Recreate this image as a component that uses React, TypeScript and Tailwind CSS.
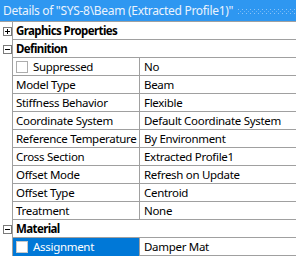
import React from "react";

type Row =
  | { kind: "section"; label: string; sign: "+" | "-" }
  | { kind: "prop"; label: string; value: string; check?: boolean; selected?: boolean };

const rows: Row[] = [
  { kind: "section", label: "Graphics Properties", sign: "+" },
  { kind: "section", label: "Definition", sign: "-" },
  { kind: "prop", label: "Suppressed", value: "No", check: true },
  { kind: "prop", label: "Model Type", value: "Beam" },
  { kind: "prop", label: "Stiffness Behavior", value: "Flexible" },
  { kind: "prop", label: "Coordinate System", value: "Default Coordinate System" },
  { kind: "prop", label: "Reference Temperature", value: "By Environment" },
  { kind: "prop", label: "Cross Section", value: "Extracted Profile1" },
  { kind: "prop", label: "Offset Mode", value: "Refresh on Update" },
  { kind: "prop", label: "Offset Type", value: "Centroid" },
  { kind: "prop", label: "Treatment", value: "None" },
  { kind: "section", label: "Material", sign: "-" },
  { kind: "prop", label: "Assignment", value: "Damper Mat", check: true, selected: true },
];

function SignBox({ sign }: { sign: "+" | "-" }) {
  return (
    <svg width="9" height="9" viewBox="0 0 9 9" className="block">
      <rect x="0.5" y="0.5" width="8" height="8" fill="white" stroke="#7a7a7a" />
      <line x1="2" y1="4.5" x2="7" y2="4.5" stroke="#000" />
      {sign === "+" && <line x1="4.5" y1="2" x2="4.5" y2="7" stroke="#000" />}
    </svg>
  );
}

function Grip() {
  return (
    <svg width="58" height="21" className="block">
      <defs>
        <pattern id="dots" width="4" height="4" patternUnits="userSpaceOnUse" x="0" y="9">
          <rect x="0" y="0" width="1" height="1" fill="#8cc4f7" />
          <rect x="2" y="2" width="1" height="1" fill="#6fb3f4" />
        </pattern>
      </defs>
      <rect x="0" y="9" width="58" height="6" fill="url(#dots)" />
    </svg>
  );
}

export default function App() {
  return (
    <div
      className="w-[296px] h-[258px] overflow-hidden bg-white text-black"
      style={{ fontFamily: '"Noto Sans", "Open Sans", sans-serif' }}
    >
      <div className="h-[21px] bg-[#2e97f1] flex items-center">
        <div className="pl-[3px] text-[12px] leading-none text-[#eaf3fd] whitespace-nowrap tracking-[-0.3px]">
          Details of "SYS-8\Beam (Extracted Profile1)"
        </div>
        <div className="ml-auto">
          <Grip />
        </div>
      </div>
      <div className="h-[1px] bg-[#a0a0a0]" />
      <div className="flex flex-col text-[11.5px] leading-none tracking-[-0.3px]">
        {rows.map((r, i) => (
          <div key={i} className="flex h-[18px]">
            <div className="w-[12px] shrink-0 flex items-center justify-start pl-[3px]">
              {r.kind === "section" && <SignBox sign={r.sign} />}
            </div>
            <div className="w-[1px] bg-[#a0a0a0] shrink-0" />
            {r.kind === "section" ? (
              <div className="flex-1 flex items-center pl-[3px] font-bold tracking-[-0.6px] border-b border-[#a0a0a0] whitespace-nowrap">
                {r.label}
              </div>
            ) : (
              <>
                <div
                  className={
                    "w-[126px] shrink-0 flex items-center pl-[3px] border-b whitespace-nowrap " +
                    (r.selected
                      ? "bg-[#0078d7] text-white border-[#0078d7]"
                      : "border-[#a0a0a0]")
                  }
                >
                  {r.check && (
                    <span
                      className={
                        "inline-block w-[12px] h-[12px] mr-[5px] border " +
                        (r.selected ? "bg-white border-[#c8c8c8]" : "bg-white border-[#adadad]")
                      }
                    />
                  )}
                  {r.label}
                </div>
                <div className="w-[1px] bg-[#a0a0a0] shrink-0" />
                <div className="flex-1 flex items-center pl-[4px] border-b border-[#a0a0a0] whitespace-nowrap">
                  {r.value}
                </div>
              </>
            )}
          </div>
        ))}
      </div>
    </div>
  );
}
